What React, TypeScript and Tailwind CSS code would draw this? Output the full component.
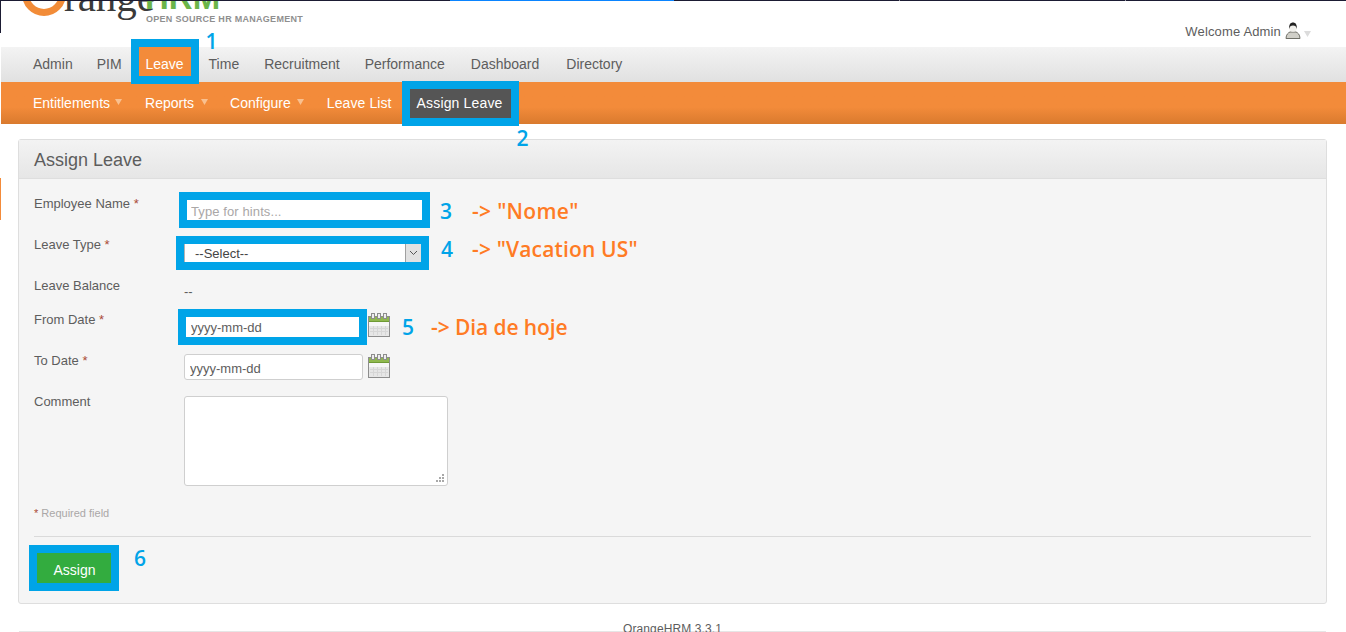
import React from "react";

const num = `font-['Open_Sans',sans-serif] font-semibold text-[21px] leading-none text-[#00a4e8]`;
const note = `font-['Open_Sans',sans-serif] font-semibold text-[21px] leading-none text-[#ff7b24] whitespace-pre`;

function Caret({ cls }: { cls: string }) {
  return (
    <svg width="7" height="6" viewBox="0 0 7 6" className={cls}>
      <path d="M0 0h7L3.5 6z" fill="currentColor" />
    </svg>
  );
}

function Calendar() {
  return (
    <svg width="22" height="24" viewBox="0 0 22 24" className="shrink-0">
      <rect x="0.5" y="3.5" width="21" height="20" fill="#e6e6e6" stroke="#8d8d8d" />
      <rect x="1" y="4" width="20" height="4" fill="#8fb84e" />
      <rect x="1" y="8" width="20" height="1" fill="#6f9a35" />
      <rect x="3.5" y="0.5" width="3" height="5" fill="#eee" stroke="#8d8d8d" />
      <rect x="9.5" y="0.5" width="3" height="5" fill="#eee" stroke="#8d8d8d" />
      <rect x="15.5" y="0.5" width="3" height="5" fill="#eee" stroke="#8d8d8d" />
      <rect x="1" y="9" width="20" height="4" fill="#f6f6f6" />
      <path d="M5.500 13v9M9.500 13v9M13.500 13v9M17.500 13v9M2 15.500h18M2 18.500h18" stroke="#d6d6d6" fill="none" />
    </svg>
  );
}

function Label({ text, req }: { text: string; req?: boolean }) {
  return (
    <div className="w-[150px] shrink-0 pt-px text-[13px] leading-4 text-[#5d5d5d]">
      {text}
      {req && <span className="text-[#aa4935]"> *</span>}
    </div>
  );
}

export default function App() {
  return (
    <div className="flex h-[632px] w-[1346px] overflow-hidden bg-white font-['Liberation_Sans',Arial,sans-serif]">
      <div className="flex w-px shrink-0 flex-col">
        <div className="h-[33px] bg-[#1b1b33]" />
        <div className="h-[145px] bg-white" />
        <div className="h-[42px] bg-[#f38b3a]" />
      </div>

      <div className="flex min-w-0 flex-1 flex-col">
        <div className="flex h-px shrink-0">
          <div className="w-[449px] bg-[#1b1b33]" />
          <div className="w-[224px] bg-[#0a84ff]" />
          <div className="w-[225px] bg-[#1b1b33]" />
          <div className="w-px bg-[#9a9aa5]" />
          <div className="w-[225px] bg-[#1b1b33]" />
          <div className="w-px bg-[#9a9aa5]" />
          <div className="flex-1 bg-[#1b1b33]" />
        </div>

        <header className="flex h-[46px] shrink-0 items-start justify-between">
          <svg width="320" height="24" viewBox="0 0 320 24" className="shrink-0">
            <circle cx="43" cy="-7" r="18.500" fill="none" stroke="#f28c38" strokeWidth="7" />
            <text x="63" y="10" fontFamily="Liberation Serif, serif" fontSize="41" fill="#3a3a3a">range</text>
            <text x="144" y="8" fontFamily="Liberation Sans, sans-serif" fontSize="33" fontWeight="700" fill="#6bb54a">HRM</text>
            <text x="145" y="21" fontFamily="Liberation Sans, sans-serif" fontSize="9" fontWeight="700" fill="#8f8f8f" letterSpacing="0.28">OPEN SOURCE HR MANAGEMENT</text>
          </svg>
          <div className="mr-[35px] mt-[23px] flex items-center text-[13px] leading-4 text-[#5d5d5d]">
            <span className="tracking-[0.15px]">Welcome Admin</span>
            <svg width="16" height="17" viewBox="0 0 16 17" className="ml-[4px] -mt-[3px]">
              <path d="M1 16.500c0-4 2.500-6 4-6.500h6c1.500.5 4 2.500 4 6.500z" fill="#d0cfc8" stroke="#6f6f67" />
              <circle cx="8" cy="6" r="3.800" fill="#f1f0ec" />
              <path d="M4.200 7C3.800 2.500 5.500.5 8 .5s4.200 2 3.800 6.500c-.5-2.500-1.500-3.500-3.800-3.500S4.700 4.500 4.200 7z" fill="#222" />
            </svg>
            <Caret cls="ml-[3px] mt-[3px] text-[#dcdcdc]" />
          </div>
        </header>

        <nav className="flex h-[35px] shrink-0 items-start bg-gradient-to-b from-[#f3f3f3] to-[#e1e1e1] pl-[26px] text-[14px] leading-[29px] text-[#5d5d5d]">
          <a className="ml-[6px] mr-[24px] mt-[3px]">Admin</a>
          <a className="mr-[17px] mt-[3px]">PIM</a>
          <a className="relative h-[29px] w-[52px] bg-[#f38b3a] text-center leading-[34px] text-white outline-8 outline-[#00a4e8]">
            Leave
            <span className={`${num} absolute -top-[16px] left-[67px]`}>1</span>
          </a>
          <a className="ml-[18px] mr-[25px] mt-[3px]">Time</a>
          <a className="mr-[25px] mt-[3px]">Recruitment</a>
          <a className="mr-[26px] mt-[3px]">Performance</a>
          <a className="mr-[27px] mt-[3px]">Dashboard</a>
          <a className="mt-[3px]">Directory</a>
        </nav>

        <nav className="flex h-[42px] shrink-0 items-center bg-gradient-to-b from-[#f38b3a] from-60% to-[#d97a2e] pl-[32px] text-[14px] text-white">
          <a>Entitlements</a>
          <Caret cls="ml-[5px] mr-[23px] mb-[3px] text-[#f9c08f]" />
          <a>Reports</a>
          <Caret cls="ml-[7px] mr-[22px] mb-[3px] text-[#f9c08f]" />
          <a>Configure</a>
          <Caret cls="ml-[6px] mr-[23px] mb-[3px] text-[#f9c08f]" />
          <a className="tracking-[0.1px]">Leave List</a>
          <a className="relative ml-[18px] h-[29px] w-[101px] bg-[#555555] pl-[7px] leading-[29px] tracking-[0.15px] outline-8 outline-[#00a4e8]">
            Assign Leave
            <span className={`${num} absolute left-[107px] top-[39px]`}>2</span>
          </a>
        </nav>

        <main className="ml-[17px] mr-[19px] mt-[15px] h-[465px] shrink-0 rounded-[3px] border border-[#dedede] bg-[#f5f5f5]">
          <div className="flex h-[39px] items-center border-b border-[#dedede] bg-gradient-to-b from-[#f3f3f3] to-[#e6e6e6] pl-[15px] pt-[2px] text-[18px] text-[#5d5d5d]">
            Assign Leave
          </div>
          <div className="px-[15px] pt-[16px]">
            <div className="flex h-[41px]">
              <Label text="Employee Name" req />
              <input
                placeholder="Type for hints..."
                className="mt-[5px] ml-[3px] h-[20px] w-[235px] bg-white px-[4px] pt-[2px] text-[13px] tracking-[0.1px] text-[#5d5d5d] outline-8 outline-[#00a4e8] placeholder:text-[#aaa7a7]"
              />
              <div className="ml-[18px] mt-[6px] flex">
                <span className={num}>3</span>
                <span className={`${note} ml-[20px] tracking-[0.3px]`}>{'-> "Nome"'}</span>
              </div>
            </div>
            <div className="flex h-[41px]">
              <Label text="Leave Type" req />
              <div className="mt-[8px] flex h-[18px] w-[237px] items-stretch border-l border-[#b4b4b4] bg-white text-[13px] leading-[19px] text-[#444] outline-8 outline-[#00a4e8]">
                <span className="flex-1 pl-[10px]">--Select--</span>
                <span className="flex w-[16px] items-center justify-center border-l border-[#a0a0a0] bg-[#e1e1e1]">
                  <svg width="9" height="6" viewBox="0 0 9 6">
                    <path d="M1 1l3.500 3.500L8 1" fill="none" stroke="#555" />
                  </svg>
                </span>
              </div>
              <div className="ml-[20px] mt-[3px] flex">
                <span className={num}>4</span>
                <span className={`${note} ml-[19px] tracking-[0.15px]`}>{'-> "Vacation US"'}</span>
              </div>
            </div>
            <div className="flex h-[34px]">
              <Label text="Leave Balance" />
              <span className="text-[13px] leading-[29px] text-[#5d5d5d]">--</span>
            </div>
            <div className="flex h-[41px]">
              <Label text="From Date" req />
              <input
                defaultValue="yyyy-mm-dd"
                className="mt-[6px] ml-[2px] h-[20px] w-[173px] bg-white px-[5px] pt-px text-[13px] text-[#5d5d5d] outline-8 outline-[#00a4e8]"
              />
              <div className="ml-[9px] mt-[2px]">
                <Calendar />
              </div>
              <div className="ml-[12px] mt-[6px] flex">
                <span className={num}>5</span>
                <span className={`${note} ml-[17px] tracking-[-0.1px]`}>{"-> Dia de hoje"}</span>
              </div>
            </div>
            <div className="flex h-[41px]">
              <Label text="To Date" req />
              <input
                defaultValue="yyyy-mm-dd"
                className="mt-[2px] h-[26px] w-[179px] rounded-[3px] border border-[#cfcfcf] bg-white px-[5px] pt-[2px] text-[13px] text-[#5d5d5d]"
              />
              <div className="ml-[5px] mt-[2px]">
                <Calendar />
              </div>
            </div>
            <div className="flex h-[93px]">
              <Label text="Comment" />
              <div className="relative mt-[3px] h-[90px] w-[264px] rounded-[3px] border border-[#cfcfcf] bg-white">
                <svg width="10" height="10" viewBox="0 0 10 10" className="absolute bottom-[2px] right-[2px]">
                  <path d="M7 1h2v2H7zM4 4h2v2H4zM7 4h2v2H7zM1 7h2v2H1zM4 7h2v2H4zM7 7h2v2H7z" fill="#a8a8a8" />
                </svg>
              </div>
            </div>
            <div className="mt-[19px] h-[16px] text-[11px] leading-4 text-[#aaa7a7]">
              <span className="text-[#aa4935]">*</span> Required field
            </div>
            <div className="mt-[15px] h-px bg-[#dadada]" />
            <div className="mt-[16px] flex">
              <button className="ml-[3px] h-[30px] w-[74px] pl-px pt-[5px] bg-[#33ac3f] text-[14px] text-white outline-8 outline-[#00a4e8]">
                Assign
              </button>
              <span className={`${num} ml-[23px] mt-[-5px]`}>6</span>
            </div>
          </div>
        </main>

        <footer className="ml-[18px] mr-[20px] mt-[18px] h-[10px] shrink-0 overflow-visible border-b border-[#e6e6e6] text-center text-[12px] leading-[14px] tracking-[0.1px] text-[#5d5d5d]">
          OrangeHRM 3.3.1
        </footer>
      </div>
    </div>
  );
}
